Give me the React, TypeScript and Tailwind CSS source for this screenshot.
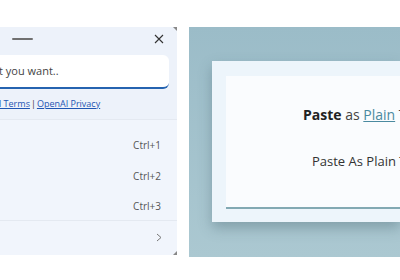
import React from "react";

export default function App() {
  const font = { fontFamily: '"Open Sans", "Noto Sans", sans-serif' };
  return (
    <div className="w-[400px] h-[280px] bg-white flex overflow-hidden" style={font}>
      {/* Left panel */}
      <div className="mt-[27px] w-[177px] h-[228px] bg-[#edf2fa] flex flex-col overflow-hidden relative shrink-0">
        <div className="h-[24px] flex items-center justify-between pl-[12px] pr-[12px] pb-[1px]">
          <div className="w-[21px] h-[2px] bg-[#707070] rounded" />
          <svg width="10" height="10" viewBox="0 0 10 10" className="mr-[1px]">
            <path d="M1 1 L9 9 M9 1 L1 9" stroke="#333" strokeWidth="1.1" />
          </svg>
        </div>
        <div className="mt-[4px] w-[169px] h-[34px] bg-white rounded-r-[6px] border-b-2 border-[#2563b0] flex items-center text-[11px] text-[#444]">
          <span className="-ml-[1px]">t you want..</span>
        </div>
        <div className="h-[30px] flex items-center text-[9px] text-[#1f56b3] pb-[1px]">
          <span className="underline -ml-[1px]">l Terms</span>
          <span className="mx-[1px] text-[#333]">|</span>
          <span className="underline">OpenAI Privacy</span>
        </div>
        <div className="flex-1 bg-[#f1f5fc] border-t border-[#e4e9f1] flex flex-col">
          <div className="h-[100px] flex flex-col justify-between pt-[18px] pb-[6px] pr-[16px] text-[10px] text-[#555] items-end">
            <span>Ctrl+1</span>
            <span>Ctrl+2</span>
            <span>Ctrl+3</span>
          </div>
          <div className="border-t border-[#e4e9f1] flex-1 flex items-center justify-end pr-[15px] pb-[1px]">
            <svg width="6" height="9" viewBox="0 0 6 9">
              <path d="M1 1 L5 4.5 L1 8" stroke="#777" strokeWidth="1" fill="none" />
            </svg>
          </div>
        </div>
        <div className="absolute right-0 bottom-0 w-0 h-0 border-l-[4px] border-l-transparent border-b-[4px] border-b-[#888]" />
        <div className="absolute right-0 top-0 w-0 h-0 border-l-[4px] border-l-transparent border-t-[4px] border-t-[#888]" />
      </div>

      {/* Right panel */}
      <div className="ml-[12px] mt-[27px] flex-1 h-[230px] bg-gradient-to-b from-[#9bbcc8] to-[#abc8d1] pt-[34px] pl-[23px] overflow-hidden">
        <div className="h-[161px] bg-[#edf5fb] pt-[15px] pl-[14px] pb-[13px] shadow-[0_6px_12px_rgba(60,90,100,0.35)]">
          <div className="h-full bg-[#fafcfe] border-b-2 border-[#82a9b3] flex flex-col">
            <div className="pl-[77px] pt-[28px] text-[14px] text-[#222] whitespace-nowrap">
              <span className="font-bold">Paste</span>
              <span className="text-[#444]"> as </span>
              <span className="underline text-[#4a8aa0]">Plain</span>
              <span className="text-[#444]"> Text</span>
            </div>
            <div className="pl-[86px] pt-[27px] text-[13px] text-[#333] whitespace-nowrap">
              Paste As Plain Text
            </div>
          </div>
        </div>
      </div>
    </div>
  );
}
